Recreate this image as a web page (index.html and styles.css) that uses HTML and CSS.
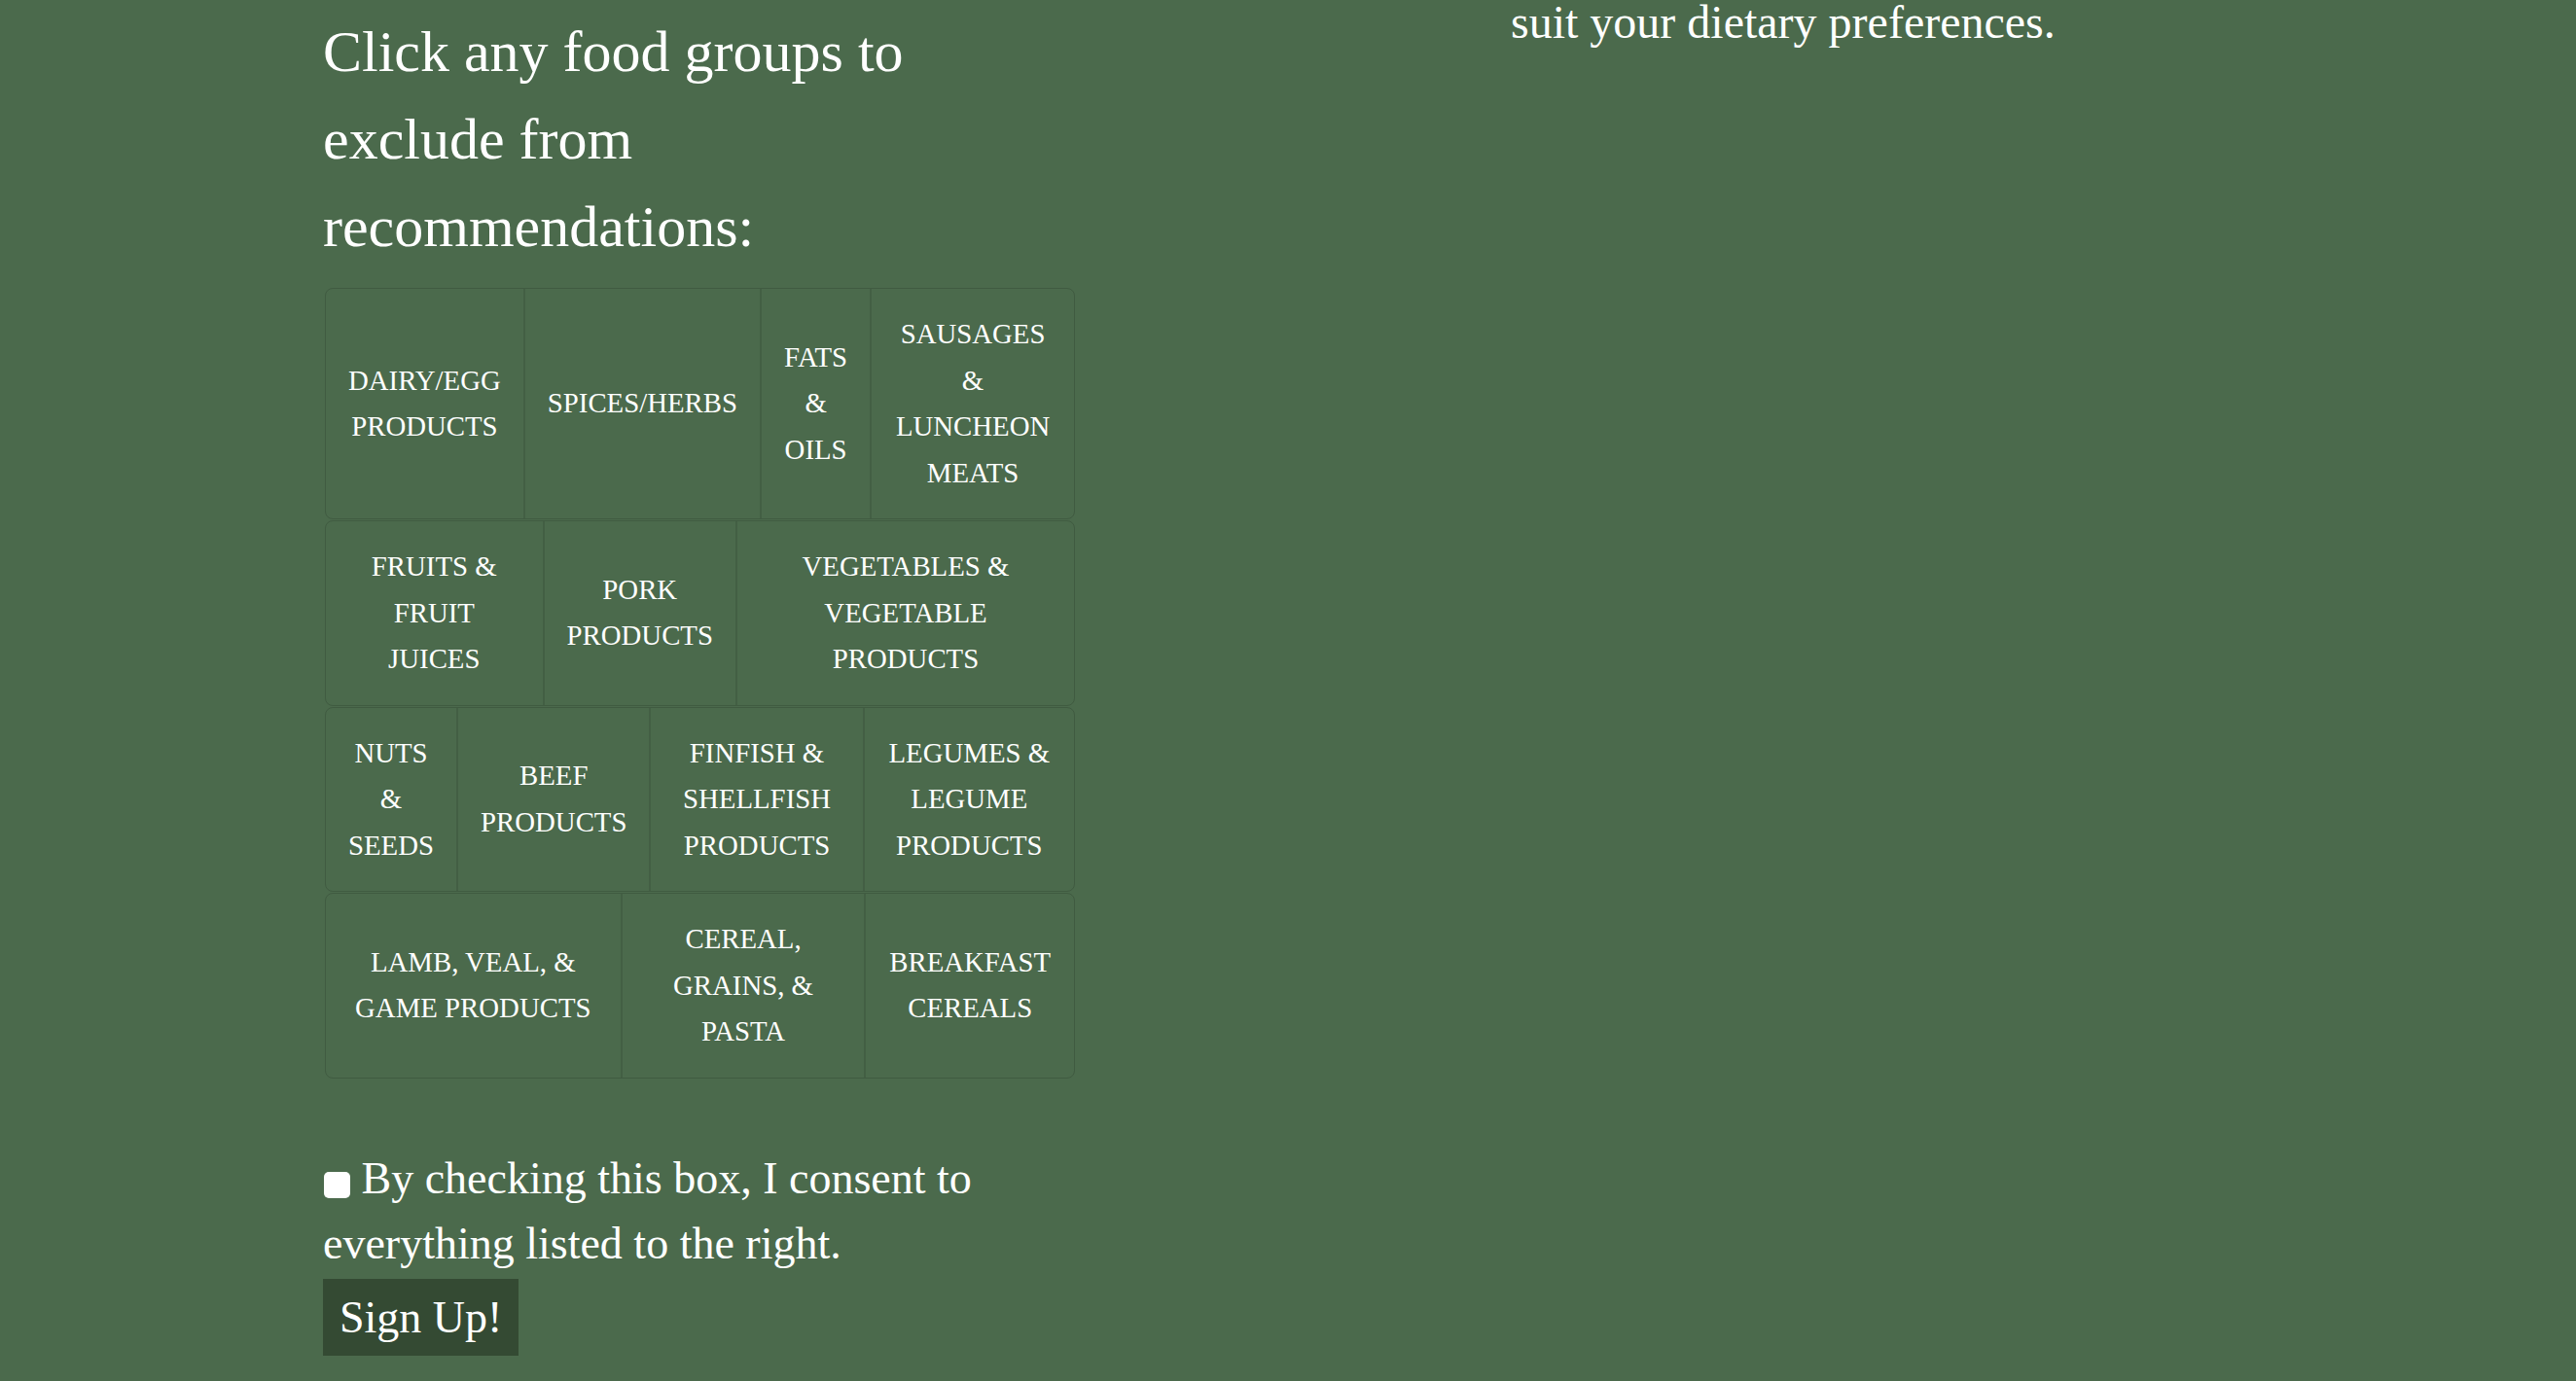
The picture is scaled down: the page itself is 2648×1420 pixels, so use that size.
FILE: index.html
```html
<!DOCTYPE html>
<html lang="en">
<head>
<meta charset="utf-8">
<title>Sign Up</title>
<link rel="stylesheet" href="styles.css">
</head>
<body>
<main class="page">
  <section class="left-col">
    <h2 class="prompt">Click any food groups to exclude from recommendations:</h2>
    <div class="groups">
      <div class="group-row">
        <div class="group"><span>DAIRY/EGG PRODUCTS</span></div>
        <div class="group"><span>SPICES/HERBS</span></div>
        <div class="group"><span>FATS &amp; OILS</span></div>
        <div class="group"><span>SAUSAGES &amp; LUNCHEON MEATS</span></div>
      </div>
      <div class="group-row">
        <div class="group"><span>FRUITS &amp; FRUIT JUICES</span></div>
        <div class="group"><span>PORK PRODUCTS</span></div>
        <div class="group"><span>VEGETABLES &amp; VEGETABLE PRODUCTS</span></div>
      </div>
      <div class="group-row">
        <div class="group"><span>NUTS &amp; SEEDS</span></div>
        <div class="group"><span>BEEF PRODUCTS</span></div>
        <div class="group"><span>FINFISH &amp; SHELLFISH PRODUCTS</span></div>
        <div class="group"><span>LEGUMES &amp; LEGUME PRODUCTS</span></div>
      </div>
      <div class="group-row">
        <div class="group"><span>LAMB, VEAL, &amp; GAME PRODUCTS</span></div>
        <div class="group"><span>CEREAL, GRAINS, &amp; PASTA</span></div>
        <div class="group"><span>BREAKFAST CEREALS</span></div>
      </div>
    </div>
    <p class="consent"><input type="checkbox" class="consent-box" id="consent"> <label for="consent">By checking this box, I consent to everything listed to the right.</label></p>
    <button class="signup" type="button">Sign Up!</button>
  </section>
  <section class="right-col">
    <p class="pref">suit your dietary preferences.</p>
  </section>
</main>
</body>
</html>
```
FILE: styles.css
```css
html, body {
  margin: 0;
  padding: 0;
}

body {
  background: #4b6a4c;
  color: #ffffff;
  font-family: "Liberation Serif", "Times New Roman", serif;
  min-height: 1420px;
}

.page {
  display: grid;
  grid-template-columns: 774px 1fr;
  column-gap: 447px;
  align-items: start;
  padding: 8px 0 0 332px;
}

.left-col {
  display: flex;
  flex-direction: column;
  align-items: flex-start;
}

.prompt {
  margin: 0;
  font-size: 60px;
  font-weight: normal;
  line-height: 90px;
}

.groups {
  margin: 18px 0 0 2px;
  width: 771px;
}

.group-row {
  display: flex;
  border: 1px solid #405b41;
  border-radius: 8px;
  margin-bottom: 1px;
  box-sizing: border-box;
}

.group {
  display: flex;
  align-items: center;
  justify-content: center;
  text-align: center;
  padding: 23px 23px;
  border-right: 2px solid #435f44;
  font-size: 28.8px;
  line-height: 47.5px;
  cursor: pointer;
}

.group:last-child {
  border-right: none;
}

.consent {
  margin: 68px 0 0 0;
  font-size: 46px;
  line-height: 67.5px;
}

.consent-box {
  appearance: none;
  -webkit-appearance: none;
  width: 27px;
  height: 27px;
  margin: 0 0 0 1px;
  background: #ffffff;
  border-radius: 5px;
  vertical-align: -5px;
}

.signup {
  margin-top: 2px;
  padding: 13px 17px;
  border: none;
  border-radius: 0;
  background: #344a33;
  color: #ffffff;
  font-family: "Liberation Serif", "Times New Roman", serif;
  font-size: 46px;
  line-height: normal;
}

.right-col {
  min-width: 0;
}

.pref {
  margin: -21px 0 0 0;
  font-size: 48px;
  line-height: 72px;
}
```
